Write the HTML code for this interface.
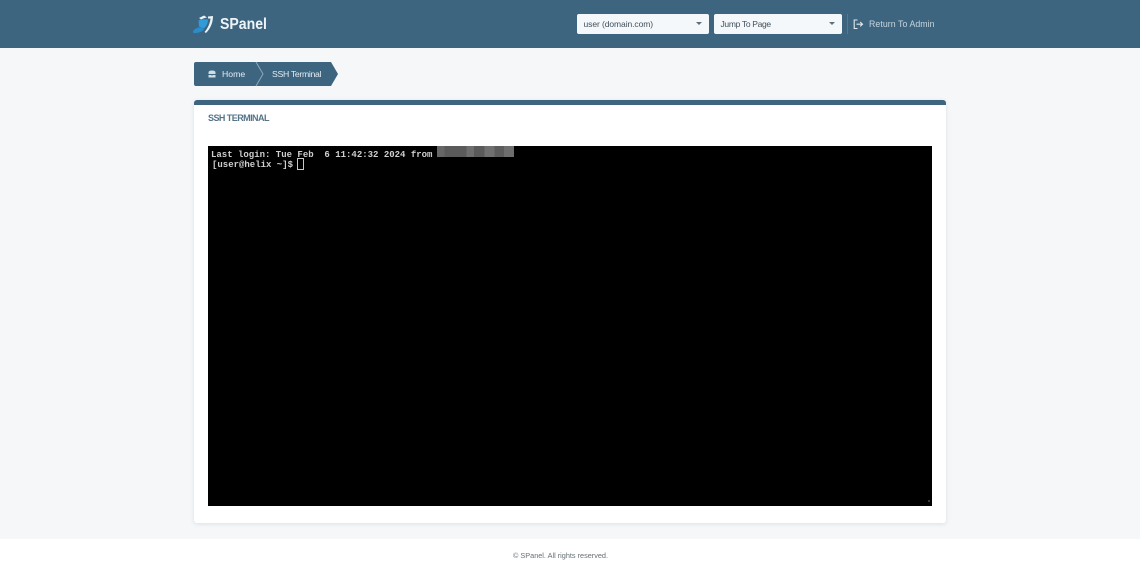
<!DOCTYPE html>
<html>
<head>
<meta charset="utf-8">
<style>
html,body{margin:0;padding:0;width:1140px;height:573px;overflow:hidden;background:#f5f7f9;font-family:"Liberation Sans",sans-serif;}
.a{position:absolute;white-space:nowrap;}
.t{filter:blur(.25px);}
#hdr{left:0;top:0;width:1140px;height:48px;background:#3d6580;}
.sel{background:#f5f8fa;border-radius:2px;height:20px;top:14px;font-size:8.5px;line-height:20px;color:#40505c;box-sizing:border-box;padding-left:6.5px;letter-spacing:-.08px;}
.car{top:22px;width:0;height:0;border-left:3.5px solid transparent;border-right:3.5px solid transparent;border-top:3.5px solid #5d6f7b;}
.term{font:bold 9px/10px "Liberation Mono",monospace;color:#cfcfcf;white-space:pre;}
</style>
</head>
<body>
<div class="a" id="hdr"></div>

<svg class="a t" style="left:192px;top:13px" width="24" height="23" viewBox="0 0 24 23">
  <path d="M7 5 L12 2.5 L15 4.5 L12.5 5 L9 6.5 Z" fill="#e8f3f8"/>
  <path d="M16 3.5 L21 3 C21 9 19 15 14 20 L12.5 19 C16 15 18 10 18.5 5.5 L16 5.5 Z" fill="#e8f3f8"/>
  <path d="M6.5 7.5 C9.5 6 13 6.5 16 6.5 C16 10 14.5 13 12 15.5 L7 13.5 Z" fill="#2f9bd8"/>
  <path d="M1 18 C3.5 15 7 13.5 10.5 14.5 L12 17 C8.5 19.5 4.5 20.5 1.5 20 Z" fill="#2a8cc9"/>
</svg>
<div class="a t" style="left:220px;top:15px;font:bold 16px/20px 'Liberation Sans',sans-serif;color:#edf4f7;transform:scaleX(.88);transform-origin:0 0">SPanel</div>

<div class="a sel t" style="left:577px;width:132px">user (domain.com)</div>
<div class="a car" style="left:696px"></div>
<div class="a sel t" style="left:714px;width:128px;letter-spacing:-.32px">Jump To Page</div>
<div class="a car" style="left:829px"></div>
<div class="a" style="left:847px;top:14px;width:1px;height:20px;background:#55798f"></div>
<svg class="a t" style="left:853px;top:19px" width="11" height="11" viewBox="0 0 11 11" fill="none" stroke="#dfe9ee" stroke-width="1.1">
  <path d="M4.5 1 H1.2 V9.5 H4.5"/><path d="M3.5 5.2 H9.5 M7.2 3 L9.5 5.2 L7.2 7.4"/>
</svg>
<div class="a t" style="left:869px;top:14px;font-size:8.8px;line-height:20px;color:#c5d5de;letter-spacing:.05px">Return To Admin</div>

<svg class="a" style="left:194px;top:62px" width="146" height="25" viewBox="0 0 146 25">
  <path d="M2 0 H137 L144 12 L137 24 H2 Q0 24 0 22 V2 Q0 0 2 0 Z" fill="#3d6580"/>
  <path d="M62 0 L69 12 L62 24" fill="none" stroke="#8da8b9" stroke-width="1"/>
  <path d="M14.5 15.5 V10.5 Q14.5 8.5 18 8.5 Q21.5 8.5 21.5 10.5 V15.5 Z" fill="#cfdde5"/>
  <path d="M14.5 12.5 H21.5 M18 12 V13.5" stroke="#3d6580" stroke-width="1" fill="none"/>
</svg>
<div class="a t" style="left:222px;top:64px;font-size:8.7px;line-height:20px;color:#e3ecf1">Home</div>
<div class="a t" style="left:272px;top:64px;font-size:8.7px;line-height:20px;color:#e3ecf1;letter-spacing:-.32px">SSH Terminal</div>

<div class="a" style="left:194px;top:100px;width:752px;height:423px;background:#fff;border-top:5px solid #3d6580;border-radius:3px;box-sizing:border-box;box-shadow:0 1px 5px rgba(60,80,95,.13)"></div>
<div class="a t" style="left:208px;top:110px;font:bold 9px/16px 'Liberation Sans',sans-serif;color:#557488;letter-spacing:-.55px">SSH TERMINAL</div>

<div class="a" style="left:208px;top:146px;width:724px;height:360px;background:#000"></div>
<div class="a" style="left:928px;top:500px;width:2px;height:2px;background:#3a3a3a"></div>
<div class="a term t" style="left:211px;top:150px">Last login: Tue Feb  6 11:42:32 2024 from</div>
<div class="a term t" style="left:212px;top:160px">[user@helix ~]$</div>
<div class="a" style="left:297px;top:158px;width:5px;height:10px;border:1px solid #c8c8c8"></div>
<div class="a" style="left:437px;top:146px;width:77px;height:11px;background:linear-gradient(90deg,#666 0 10%,#5a5a5a 10% 38%,#6e6e6e 38% 48%,#5a5a5a 48% 62%,#707070 62% 75%,#5c5c5c 75% 87%,#6e6e6e 87%)"></div>

<div class="a" style="left:0;top:539px;width:1140px;height:34px;background:#fff"></div>
<div class="a t" style="left:513px;top:549px;font:7.3px/14px 'Liberation Sans',sans-serif;color:#666f75">© SPanel. All rights reserved.</div>
</body>
</html>
